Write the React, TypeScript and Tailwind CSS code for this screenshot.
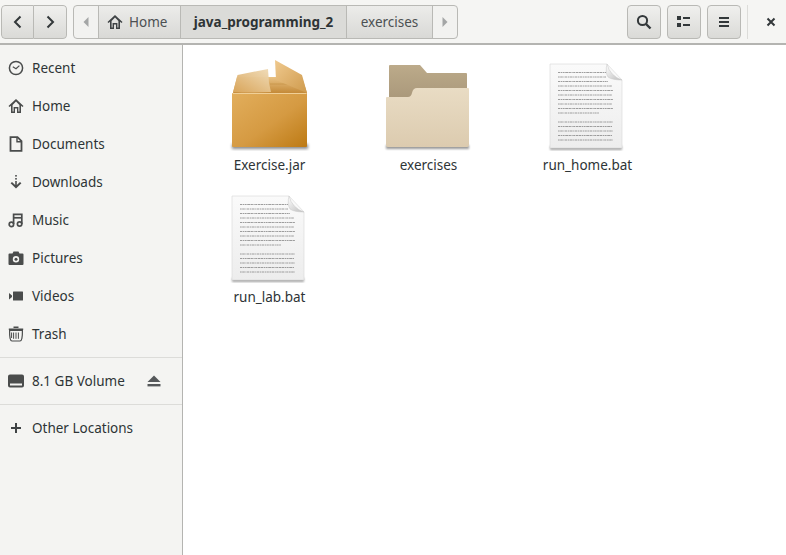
import React from 'react';

const font = { fontFamily: '"Noto Sans", sans-serif' };

const RecentIcon = () => (
  <svg width="16" height="16" viewBox="0 0 16 16" fill="none" stroke="#4a4c4c" strokeWidth="1.5">
    <circle cx="8" cy="8" r="6.6" />
    <path d="M4.8 6.8 L8 8.8 L11.4 5.6" strokeWidth="1.2" />
  </svg>
);
const HomeIcon = ({ color = '#4a4c4c' }: { color?: string }) => (
  <svg width="16" height="16" viewBox="0 0 16 16" fill={color}>
    <path d="M8 1 L0.5 8 L1.5 9 L3 7.8 V15 H7 V10.5 H9 V15 H13 V7.8 L14.5 9 L15.5 8 Z M4.6 13.5 V7 L8 3.4 L11.4 7 V13.5 H10.4 V9 H5.6 V13.5 Z" fillRule="evenodd" />
  </svg>
);
const DocIcon = () => (
  <svg width="16" height="16" viewBox="0 0 16 16" fill="none" stroke="#4a4c4c" strokeWidth="1.8">
    <path d="M2.5 1.2 H9.5 L13.5 5.2 V14.8 H2.5 Z" />
    <path d="M9 1.5 V5.8 H13" strokeWidth="1.4" />
  </svg>
);
const DownloadIcon = () => (
  <svg width="16" height="16" viewBox="0 0 16 16" fill="#4a4c4c">
    <rect x="7.2" y="1" width="1.6" height="1.6" />
    <rect x="7.2" y="4" width="1.6" height="1.6" />
    <path d="M7.2 7 H8.8 V11 L12 8 L13.4 9.3 L8 14.6 L2.6 9.3 L4 8 L7.2 11 Z" />
  </svg>
);
const MusicIcon = () => (
  <svg width="16" height="16" viewBox="0 0 16 16" fill="none" stroke="#4a4c4c" strokeWidth="1.7">
    <circle cx="3.4" cy="12.4" r="2.2" />
    <circle cx="11.6" cy="12" r="2.2" />
    <path d="M5.6 12 V2.4 H13.8 V12" />
    <path d="M5.6 5.8 H13.8" />
  </svg>
);
const CameraIcon = () => (
  <svg width="16" height="16" viewBox="0 0 16 16" fill="#4a4c4c">
    <path fillRule="evenodd" d="M1.5 3.5 H4.5 L5.5 1.5 H10.5 L11.5 3.5 H14.5 Q15.5 3.5 15.5 4.5 V14 Q15.5 15 14.5 15 H1.5 Q0.5 15 0.5 14 V4.5 Q0.5 3.5 1.5 3.5 Z M8 6 A3.2 3.2 0 1 0 8 12.4 A3.2 3.2 0 1 0 8 6 Z" />
    <circle cx="8" cy="9.2" r="1.5" />
  </svg>
);
const VideoIcon = () => (
  <svg width="16" height="16" viewBox="0 0 16 16" fill="#4a4c4c">
    <path d="M1 5 L4 7.4 V9 L1 11.4 Z" />
    <rect x="5" y="3.6" width="10" height="9" rx="0.5" />
  </svg>
);
const TrashIcon = () => (
  <svg width="16" height="16" viewBox="0 0 16 16" fill="none" stroke="#4a4c4c" strokeWidth="1.2">
    <path d="M5.5 1.2 H10.5 M0.8 3.2 H15.2" strokeWidth="1.4" />
    <path d="M1.6 4.4 Q1.4 15 4 15 H12 Q14.6 15 14.4 4.4 Z" />
    <path d="M5.6 6.5 V12.8 M8 6.5 V12.8 M10.4 6.5 V12.8 M3.6 6.5 V12" strokeWidth="1" />
  </svg>
);
const DriveIcon = () => (
  <svg width="16" height="14" viewBox="0 0 16 14" fill="#4a4c4c">
    <path fillRule="evenodd" d="M2 0.5 H14 Q16 0.5 16 2.5 V11.5 Q16 13.5 14 13.5 H2 Q0 13.5 0 11.5 V2.5 Q0 0.5 2 0.5 Z M2 9.5 V11.5 H14 V9.5 Z" />
  </svg>
);
const EjectIcon = () => (
  <svg width="14" height="12" viewBox="0 0 14 12" fill="#55585a">
    <path d="M7 0.5 L13.5 7 H0.5 Z" />
    <rect x="0.5" y="9" width="13" height="2.4" />
  </svg>
);

const JarIcon = () => (
  <svg width="96" height="96" viewBox="222 55 96 96">
    <defs>
      <linearGradient id="boxFront" x1="0" y1="0" x2="1" y2="1">
        <stop offset="0" stopColor="#e2ae5c" />
        <stop offset="0.55" stopColor="#d59a42" />
        <stop offset="1" stopColor="#bd7a14" />
      </linearGradient>
      <linearGradient id="flapL" x1="1" y1="0" x2="0" y2="1">
        <stop offset="0" stopColor="#f0dcb8" />
        <stop offset="1" stopColor="#d9a55a" />
      </linearGradient>
      <linearGradient id="flapR" x1="0" y1="0" x2="1" y2="1">
        <stop offset="0" stopColor="#efc98e" />
        <stop offset="1" stopColor="#cf9a4c" />
      </linearGradient>
      <linearGradient id="boxInner" x1="0" y1="0" x2="0" y2="1">
        <stop offset="0" stopColor="#e9c284" />
        <stop offset="1" stopColor="#c48a38" />
      </linearGradient>
      <filter id="boxBlur" x="-20%" y="-200%" width="140%" height="500%">
        <feGaussianBlur stdDeviation="1.5" />
      </filter>
    </defs>
    <rect x="232" y="144" width="76" height="5" fill="#000" opacity="0.45" filter="url(#boxBlur)" />
    <path d="M237 77 L302 77 L307 93 L233 93 Z" fill="url(#boxInner)" />
    <path d="M270 84 H304" stroke="#b98336" strokeWidth="0.8" opacity="0.6" />
    <path d="M232 93 H307 V146 Q307 147 306 147 H233 Q232 147 232 146 Z" fill="url(#boxFront)" />
    <path d="M232.5 93.5 H306.5" stroke="#f0cf96" strokeWidth="1" />
    <path d="M233 92 L237.5 75 L268 69 L269 83 L271 92 Q250 93 233 92 Z" fill="url(#flapL)" opacity="0.97" />
    <path d="M275 60 L302 75 L307 93 L276 80 Z" fill="url(#flapR)" />
  </svg>
);

const FolderIcon = () => (
  <svg width="96" height="96" viewBox="381 55 96 96">
    <defs>
      <linearGradient id="folderBack" x1="0" y1="0" x2="0" y2="1">
        <stop offset="0" stopColor="#bcaa8a" />
        <stop offset="1" stopColor="#a9987a" />
      </linearGradient>
      <linearGradient id="folderFront" x1="0" y1="0" x2="0" y2="1">
        <stop offset="0" stopColor="#e9dcc4" />
        <stop offset="1" stopColor="#dccbaf" />
      </linearGradient>
      <filter id="folderBlur" x="-20%" y="-200%" width="140%" height="500%">
        <feGaussianBlur stdDeviation="1.2" />
      </filter>
    </defs>
    <rect x="386" y="145" width="83" height="4" fill="#000" opacity="0.4" filter="url(#folderBlur)" />
    <path d="M389 66 Q389 65 390 65 H420 L427 73 H466 Q467 73 467 74 V100 H389 Z" fill="url(#folderBack)" />
    <path d="M386 98 Q386 97 387 97 H408 Q411 97 412 93 Q413 88 417 88 H468 Q469 88 469 89 V145 Q469 147 467 147 H388 Q386 147 386 145 Z" fill="url(#folderFront)" />
  </svg>
);

// fake line lengths for the text thumbnail in the file icon, 0 is the paragraph gap
const lineWidths = [48, 48, 50, 54, 55, 54, 55, 54, 55, 41, 0, 55, 54, 55, 54, 55];

const TextFileIcon = ({ id }: { id: string }) => (
  <svg width="96" height="96" viewBox="540 55 96 96">
    <defs>
      <linearGradient id={`${id}-page`} x1="0" y1="0" x2="0" y2="1">
        <stop offset="0" stopColor="#fafafa" />
        <stop offset="1" stopColor="#ededed" />
      </linearGradient>
      <linearGradient id={`${id}-fold`} x1="0" y1="0" x2="1" y2="1">
        <stop offset="0" stopColor="#ffffff" />
        <stop offset="1" stopColor="#bdbdbd" />
      </linearGradient>
      <filter id={`${id}-blur`} x="-20%" y="-200%" width="140%" height="500%">
        <feGaussianBlur stdDeviation="1.2" />
      </filter>
    </defs>
    <rect x="550" y="146" width="72" height="4" fill="#000" opacity="0.35" filter={`url(#${id}-blur)`} />
    <path d="M550 64 H607 L622 80 V148 H550 Z" fill={`url(#${id}-page)`} stroke="#d6d6d6" strokeWidth="0.6" />
    {lineWidths.map((w, i) =>
      w ? (
        <path
          key={i}
          d={`M558 ${72.5 + i * 4.5} H${558 + w}`}
          stroke="#808080"
          strokeWidth="1"
          strokeDasharray={i % 2 ? '1.7 0.5 2.6 0.6 1.1 0.5 2.2 0.6' : '2.4 0.6 1.2 0.5 1.9 0.6 2.8 0.5'}
          opacity="0.75"
        />
      ) : null,
    )}
    <path d="M607 64 Q610 76 622 80 Q612 80 608 77 Q605 72 607 64 Z" fill={`url(#${id}-fold)`} stroke="#c4c4c4" strokeWidth="0.5" />
  </svg>
);

const navBtn = 'flex items-center justify-center border border-[#b9b9b5] bg-gradient-to-b from-[#f0f0ee] to-[#dadad7]';
const pathBtn = 'flex items-center h-full border-l border-[#b9b9b5] bg-gradient-to-b from-[#ececea] to-[#d9d9d6] text-[#4c5052]';

const IconButton = ({ children }: { children: React.ReactNode }) => (
  <button className={`${navBtn} w-[34px] h-[34px] rounded-[4px]`}>{children}</button>
);

const places = [
  { label: 'Recent', icon: <RecentIcon /> },
  { label: 'Home', icon: <HomeIcon /> },
  { label: 'Documents', icon: <DocIcon /> },
  { label: 'Downloads', icon: <DownloadIcon /> },
  { label: 'Music', icon: <MusicIcon /> },
  { label: 'Pictures', icon: <CameraIcon /> },
  { label: 'Videos', icon: <VideoIcon /> },
  { label: 'Trash', icon: <TrashIcon /> },
];

const files = [
  { name: 'Exercise.jar', icon: <JarIcon /> },
  { name: 'exercises', icon: <FolderIcon /> },
  { name: 'run_home.bat', icon: <TextFileIcon id="home" /> },
  { name: 'run_lab.bat', icon: <TextFileIcon id="lab" /> },
];

const SidebarRow = ({ icon, label }: { icon: React.ReactNode; label: string }) => (
  <div className="flex items-center h-[38px] pl-[8px]">
    <span className="flex items-center justify-center w-[16px] h-[16px] mr-[8px]">{icon}</span>
    <span>{label}</span>
  </div>
);

export default function App() {
  return (
    <div className="w-[786px] h-[555px] flex flex-col overflow-hidden bg-white text-[13.5px] text-[#2e3436]" style={font}>
      <header className="h-[45px] shrink-0 flex items-center pt-[1px] pl-[1px] bg-[#f5f5f3] border-b-2 border-[#b4b4b1]">
        <div className="flex h-[34px] rounded-[4px] overflow-hidden">
          <button className={`${navBtn} w-[33px] rounded-l-[4px]`}>
            <svg width="12" height="14" viewBox="0 0 12 14" fill="none" stroke="#33383a" strokeWidth="2">
              <path d="M8.5 1.5 L3 7 L8.5 12.5" />
            </svg>
          </button>
          <button className={`${navBtn} w-[33px] border-l-0 rounded-r-[4px]`}>
            <svg width="12" height="14" viewBox="0 0 12 14" fill="none" stroke="#33383a" strokeWidth="2">
              <path d="M3.5 1.5 L9 7 L3.5 12.5" />
            </svg>
          </button>
        </div>

        <div className="ml-[6px] w-[385px] h-[34px] flex rounded-[4px] border border-[#b9b9b5] bg-[#f2f2f0] overflow-hidden">
          <div className="w-[24px] flex items-center justify-center">
            <svg width="6" height="10" viewBox="0 0 6 10" fill="#a4a6a6"><path d="M5.5 0 V10 L0.5 5 Z" /></svg>
          </div>
          <div className={`${pathBtn} w-[82px] pl-[8px] gap-[6px]`}>
            <HomeIcon color="#3f4345" />
            <span>Home</span>
          </div>
          <div className="flex items-center justify-center h-full w-[166px] border-l border-[#b9b9b5] bg-[#dbdbd8] font-bold text-[#2e3436]">
            java_programming_2
          </div>
          <div className={`${pathBtn} w-[86px] justify-center`}>exercises</div>
          <div className="flex-1 h-full border-l border-[#b9b9b5] flex items-center justify-center">
            <svg width="6" height="10" viewBox="0 0 6 10" fill="#a4a6a6"><path d="M0.5 0 V10 L5.5 5 Z" /></svg>
          </div>
        </div>

        <div className="ml-auto flex items-center gap-[6px]">
          <IconButton>
            <svg width="16" height="16" viewBox="0 0 16 16" fill="none" stroke="#33383a" strokeWidth="2">
              <circle cx="6.5" cy="6.5" r="4.6" />
              <path d="M10 10 L14.5 14.5" strokeWidth="2.4" />
            </svg>
          </IconButton>
          <IconButton>
            <svg width="14" height="12" viewBox="0 0 14 12" fill="#33383a">
              <rect x="0" y="0" width="4" height="4" />
              <rect x="0" y="7" width="4" height="4" />
              <rect x="6" y="1" width="7" height="2" />
              <rect x="6" y="8" width="7" height="2" />
            </svg>
          </IconButton>
          <IconButton>
            <svg width="12" height="12" viewBox="0 0 12 12" fill="#33383a">
              <rect x="1" y="1" width="10" height="2" />
              <rect x="1" y="5" width="10" height="2" />
              <rect x="1" y="9" width="10" height="2" />
            </svg>
          </IconButton>
        </div>
        <div className="ml-[6px] w-px h-[34px] bg-[#dcdcd9]" />
        <div className="w-[38px] flex items-center justify-center pl-[8px]">
          <svg width="10" height="10" viewBox="0 0 10 10" fill="none" stroke="#33383a" strokeWidth="2">
            <path d="M1.5 1.5 L8.5 8.5 M8.5 1.5 L1.5 8.5" />
          </svg>
        </div>
      </header>

      <div className="flex flex-1 min-h-0">
        <aside className="w-[183px] shrink-0 bg-[#f4f4f2] border-r border-[#b4b4b1] pt-[4px]">
          {places.map((p) => (
            <SidebarRow key={p.label} icon={p.icon} label={p.label} />
          ))}
          <div className="mt-[4px] h-px bg-[#dcdcd9]" />
          <div className="flex items-center h-[46px] pl-[8px] pr-[21px]">
            <span className="flex items-center justify-center w-[16px] h-[16px] mr-[8px]"><DriveIcon /></span>
            <span>8.1 GB Volume</span>
            <span className="ml-auto flex"><EjectIcon /></span>
          </div>
          <div className="h-px bg-[#dcdcd9]" />
          <div className="flex items-center h-[46px] pl-[8px]">
            <span className="flex items-center justify-center w-[16px] h-[16px] mr-[8px]">
              <svg width="12" height="12" viewBox="0 0 12 12" fill="#3f4345">
                <rect x="5" y="1" width="2" height="10" />
                <rect x="1" y="5" width="10" height="2" />
              </svg>
            </span>
            <span>Other Locations</span>
          </div>
        </aside>

        <main className="flex-1 pl-[7px] pt-[10px] bg-white">
          <div className="grid grid-cols-[repeat(3,159px)] auto-rows-[132px]">
            {files.map((f) => (
              <div key={f.name} className="flex flex-col items-center">
                {f.icon}
                <span className="mt-[5px] leading-[19px] text-[#2e3436]">{f.name}</span>
              </div>
            ))}
          </div>
        </main>
      </div>
    </div>
  );
}
